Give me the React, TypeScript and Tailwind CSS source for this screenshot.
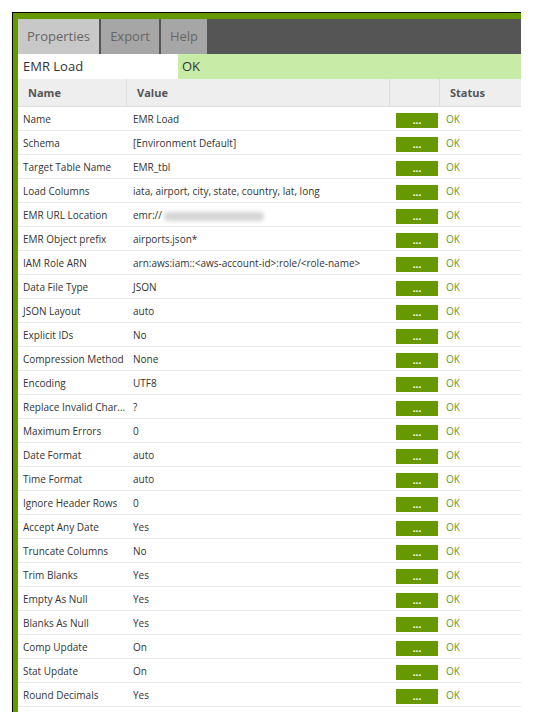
import React from 'react';

type Row = { name: string; value: React.ReactNode };

const rows: Row[] = [
  { name: 'Name', value: 'EMR Load' },
  { name: 'Schema', value: '[Environment Default]' },
  { name: 'Target Table Name', value: 'EMR_tbl' },
  { name: 'Load Columns', value: 'iata, airport, city, state, country, lat, long' },
  {
    name: 'EMR URL Location',
    value: (
      <>
        emr://
        <span className="ml-[2px] inline-block h-[9px] w-[100px] rounded-full bg-[#d4d4d4] align-middle blur-[2px]" />
      </>
    ),
  },
  { name: 'EMR Object prefix', value: 'airports.json*' },
  { name: 'IAM Role ARN', value: 'arn:aws:iam::<aws-account-id>:role/<role-name>' },
  { name: 'Data File Type', value: 'JSON' },
  { name: 'JSON Layout', value: 'auto' },
  { name: 'Explicit IDs', value: 'No' },
  { name: 'Compression Method', value: 'None' },
  { name: 'Encoding', value: 'UTF8' },
  { name: 'Replace Invalid Char...', value: '?' },
  { name: 'Maximum Errors', value: '0' },
  { name: 'Date Format', value: 'auto' },
  { name: 'Time Format', value: 'auto' },
  { name: 'Ignore Header Rows', value: '0' },
  { name: 'Accept Any Date', value: 'Yes' },
  { name: 'Truncate Columns', value: 'No' },
  { name: 'Trim Blanks', value: 'Yes' },
  { name: 'Empty As Null', value: 'Yes' },
  { name: 'Blanks As Null', value: 'Yes' },
  { name: 'Comp Update', value: 'On' },
  { name: 'Stat Update', value: 'On' },
  { name: 'Round Decimals', value: 'Yes' },
];

const cols = 'grid grid-cols-[109px_263px_50px_81px]';

function Tabs() {
  return (
    <div className="flex h-[35px] gap-[2px] bg-[#555555] text-[13px] text-[#666666]">
      <div className="flex w-[81px] items-center justify-center bg-[#c8c8c8]">Properties</div>
      <div className="flex w-[58px] items-center justify-center bg-[#a6a6a6]">Export</div>
      <div className="flex w-[46px] items-center justify-center bg-[#a6a6a6]">Help</div>
    </div>
  );
}

function PropertyRow({ row }: { row: Row }) {
  return (
    <div className={`${cols} h-[24px] border-b border-[#e8e8e8] text-[10px] text-[#333333]`}>
      <div className="truncate whitespace-nowrap pl-[5px] leading-[24px]">{row.name}</div>
      <div className="truncate whitespace-nowrap pl-[6px] leading-[24px]">{row.value}</div>
      <div className="pl-[6px] pt-[6px]">
        <div className="h-[15px] w-[42px] bg-[#669900] text-center text-[10px] font-bold leading-[15px] text-white">
          ...
        </div>
      </div>
      <div className="pl-[6px] leading-[24px] text-[#5f9b2a]">OK</div>
    </div>
  );
}

export default function App() {
  return (
    <div className="h-[728px] w-[541px] overflow-hidden bg-white pl-3 pt-3 font-['Open_Sans',sans-serif]">
      <div className="h-[700px] w-[509px] border-l border-t border-black bg-[#669900] pl-[5px] pt-[6px]">
        <div className="h-[693px] bg-white">
          <Tabs />
          <div className="flex h-[25px] text-[13px] leading-[25px] text-[#333333]">
            <div className="w-[160px] bg-white pl-[5px]">EMR Load</div>
            <div className="flex-1 bg-[#c8eca8] pl-[4px]">OK</div>
          </div>
          <div className={`${cols} h-[28px] border-b border-[#dddddd] bg-[#eeeeee] text-[11px] font-bold leading-[28px] text-[#555555]`}>
            <div className="border-r border-[#dddddd] pl-[10px]">Name</div>
            <div className="border-r border-[#dddddd] pl-[10px]">Value</div>
            <div className="border-r border-[#dddddd]" />
            <div className="pl-[10px]">Status</div>
          </div>
          {rows.map((r) => (
            <PropertyRow key={r.name} row={r} />
          ))}
        </div>
      </div>
    </div>
  );
}
